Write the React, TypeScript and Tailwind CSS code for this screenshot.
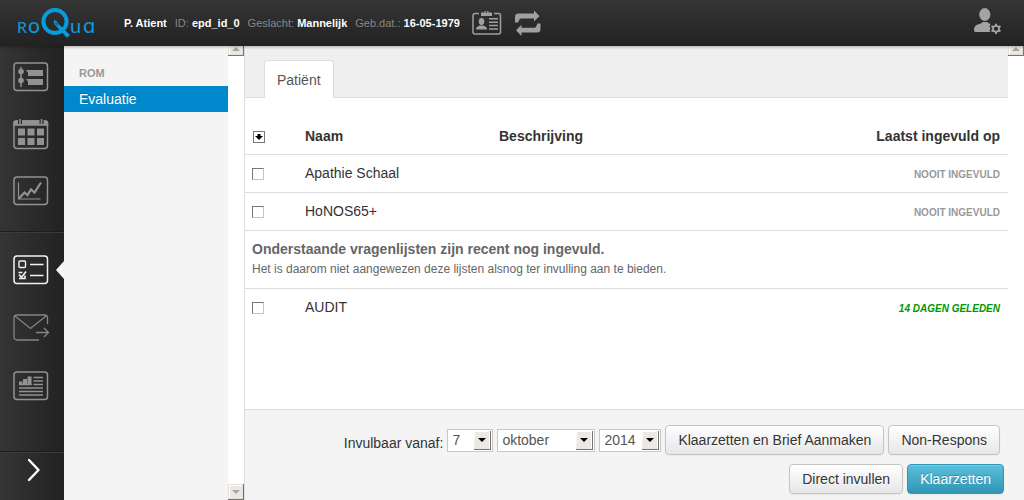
import React from "react";

function Logo() {
  return (
    <svg width="84" height="34" viewBox="0 0 84 34" role="img" aria-label="RoQua" fill="#0a9bdc">
      <text x="0" y="25" fontSize="16" fontFamily="Lato, sans-serif">R</text>
      <text x="11" y="25" fontSize="21" fontFamily="Lato, sans-serif">o</text>
      <circle cx="38" cy="13.500" r="11.600" fill="none" stroke="#0a9bdc" strokeWidth="4" />
      <path d="M41 15.500l12 11.500-3 2.800-11-11.800c-2-2-2.500-4-2-6 1.800.3 3.200 1.500 4 3.500z" />
      <path d="M38.500 14.500l2.200 3" stroke="#2b2b2b" strokeWidth="1" />
      <text x="53" y="25" fontSize="20" fontFamily="Lato, sans-serif">u</text>
      <text x="66" y="25" fontSize="20" fontFamily="Inter, sans-serif" fontWeight="400" style={{ fontFeatureSettings: '"cv11"' }}>a</text>
    </svg>
  );
}

function CardIcon() {
  return (
    <svg width="30" height="26" viewBox="0 0 30 26" fill="none" stroke="#a0a0a0" strokeWidth="1.500">
      <path d="M7 3.500H3A2 2 0 0 0 1 5.500V22a2 2 0 0 0 2 2h23.500a2 2 0 0 0 2-2V5.500a2 2 0 0 0-2-2H22" />
      <path d="M9 2.500h3.500V1.200h4v1.300H20v3.500H9z" fill="#a0a0a0" stroke="none" />
      <circle cx="14.500" cy="2.300" r=".8" fill="#2d2d2d" stroke="none" />
      <ellipse cx="9.500" cy="11.500" rx="2.800" ry="3.400" fill="#a0a0a0" stroke="none" />
      <path d="M4 19.500c0-2.800 2-3.200 4-4h3c2 .8 4 1.200 4 4z" fill="#a0a0a0" stroke="none" />
      <path d="M17 8.800h9M17 12.200h9M17 15.600h9M17 19h9" />
    </svg>
  );
}

function RefreshIcon() {
  return (
    <svg width="27" height="27" viewBox="0 0 27 27" fill="#a0a0a0">
      <path d="M1 12.500V7q0-3.500 3.500-3.500H20V0.500l5.500 5.500-5.500 5.500V8.500H7.500q-1.500 0-2 1L4 12.500z" />
      <path d="M26.500 13.500V19q0 3.500-3.500 3.500H7.500V26L2 20.300l5.500-5.500v3H20q1.500 0 2-1l1.500-3.300z" />
    </svg>
  );
}

function UserIcon() {
  return (
    <svg width="28" height="26" viewBox="0 0 28 26" fill="#a3a3a3">
      <ellipse cx="10.800" cy="6.500" rx="5.600" ry="6.500" />
      <path d="M0 22.500c0-4 1.500-5.500 6-6.700 1.500-.5 2-.8 2.500-1.800h5c.5 1 1.500 1.500 3 2l-1 2.500 1.200 2-1.200 2 .8 1.500H2q-2 0-2-1.500z" />
      <circle cx="22" cy="20.800" r="3" fill="none" stroke="#a3a3a3" strokeWidth="1.700" />
      <path d="M22 15.700v2M22 24v2M17.500 18.200l1.800 1M24.700 22.400l1.800 1M17.500 23.400l1.800-1M24.700 19.200l1.800-1" stroke="#a3a3a3" strokeWidth="2" />
    </svg>
  );
}

function Frame({ children, color = "#929292" }: { children: React.ReactNode; color?: string }) {
  return (
    <svg width="36" height="30" viewBox="0 0 36 30" fill="none" stroke={color} strokeWidth="1.500">
      <rect x="1" y="1" width="33.500" height="27.500" rx="3" />
      {children}
    </svg>
  );
}

function TimelineIcon() {
  return (
    <Frame>
      <path d="M8 5v20" />
      <g fill="#929292" stroke="none">
        <circle cx="8" cy="9.500" r="2.800" />
        <circle cx="8" cy="18.500" r="2.800" />
        <path d="M13 8h17v6H15v-3.500zM13 17h17v6H15v-3.500z" />
      </g>
    </Frame>
  );
}

function CalendarIcon() {
  return (
    <svg width="36" height="32" viewBox="0 0 36 32" fill="none" stroke="#929292" strokeWidth="1.500">
      <rect x="1" y="3" width="33.500" height="27.500" rx="3" />
      <path d="M1 7V5q0-2 2-2h29.500q2 0 2 2v2z" fill="#929292" />
      <path d="M7 0v6M28.500 0v6" stroke="#2b2b2b" strokeWidth="4" />
      <path d="M7 1v5M28.500 1v5" strokeWidth="1.500" />
      <path d="M5 10.500h7v7H5zM14.500 10.500h7v7h-7zM24 10.500h7v7h-7zM5 20h7v7H5zM14.500 20h7v7h-7zM24 20h7v7h-7z" fill="#929292" stroke="none" />
    </svg>
  );
}

function ChartIcon() {
  return (
    <Frame>
      <path d="M5.500 6.500v16.500h22" strokeWidth="1.200" />
      <path d="M6 22.500l5.500-6 3 2.500 3.500-5.500 3.500 3L28 6.500" strokeWidth="2.200" />
    </Frame>
  );
}

function ChecklistIcon() {
  return (
    <Frame color="#f2f2f2">
      <rect x="6" y="6" width="6.500" height="6.500" rx="1" strokeWidth="1.400" />
      <path d="M17 9.500h13.500M17 20.500h13.500" />
      <path d="M5.500 17.500h4M6 23.500h6v-3M6 19.500l2.500 3 4.500-6" strokeWidth="1.600" />
    </Frame>
  );
}

function MailIcon() {
  return (
    <svg width="37" height="28" viewBox="0 0 37 28" fill="none" stroke="#858585" strokeWidth="1.300">
      <path d="M26 26H4a3 3 0 0 1-3-3V4a3 3 0 0 1 3-3h27.500a3 3 0 0 1 3 3v6" />
      <path d="M2 2l15.500 12.500L33 2M23 18.500h12M31 14l4.500 4.500L31 23" />
    </svg>
  );
}

function NewsIcon() {
  return (
    <Frame>
      <path d="M6 10.500h3.500V14H6zM10 8h4v6h-4zM14.500 5.500h4V14h-4z" fill="#929292" stroke="none" />
      <path d="M6 13.500h12.500M20.500 6.500h9.500M20.500 10h9.500M20.500 13.500h9.500M6 17h24M6 20.500h24M6 24h24" />
    </Frame>
  );
}

function ScrollArrow({ down = false }: { down?: boolean }) {
  return (
    <svg width="16" height="16" viewBox="0 0 16 16" className="shrink-0">
      <rect width="16" height="16" fill="#77736e" />
      <rect width="15" height="15" fill="#e3dfda" />
      <rect x="1" y="1" width="13" height="13" fill="#fff" />
      <rect x="2" y="2" width="12" height="12" fill="#ebe8e4" />
      {down ? <path d="M4 6h8l-4 4z" fill="#aaa6a0" /> : <path d="M4 11h8l-4-4z" fill="#aaa6a0" />}
    </svg>
  );
}

function Scrollbar({ withEnd = false }: { withEnd?: boolean }) {
  return (
    <div className="flex w-4 shrink-0 flex-col justify-between bg-white" aria-hidden="true">
      <div className="flex h-2.5 items-end overflow-hidden">
        <ScrollArrow />
      </div>
      {withEnd && <ScrollArrow down />}
    </div>
  );
}

function DateSelect({ label, value, options, width }: { label: string; value: string; options: string[]; width: string }) {
  return (
    <div className={`relative ${width}`}>
      <select
        id={label}
        aria-label={label}
        defaultValue={value}
        className="block h-[23px] w-full appearance-none border border-[#c8c8c8] bg-white pr-4 pb-0.5 pl-1 text-sm leading-5 text-[#555]"
      >
        {options.map((o) => (
          <option key={o}>{o}</option>
        ))}
      </select>
      <svg width="17" height="19" viewBox="0 0 17 19" className="pointer-events-none absolute top-0.5 right-0.5">
        <path d="M0 0h17v19H0z" fill="#77736e" />
        <path d="M0 0h16v18H0z" fill="#fff" />
        <path d="M1 1h14v17H0z" fill="#ece8e3" />
        <path d="M4 7h8l-4 4z" fill="#000" />
      </svg>
    </div>
  );
}

function Button({ children, primary = false }: { children: React.ReactNode; primary?: boolean }) {
  const look = primary
    ? "border-[#2f96b4] bg-linear-to-b from-[#5bc0de] to-[#2f96b4] text-white [text-shadow:0_-1px_0_rgba(0,0,0,0.25)]"
    : "border-[#c4c4c4] bg-linear-to-b from-white to-[#e6e6e6] text-[#333] [text-shadow:0_1px_1px_rgba(255,255,255,0.75)]";
  return (
    <button
      type="button"
      className={`rounded border px-3 py-1 text-sm leading-5 whitespace-nowrap shadow-[inset_0_1px_0_rgba(255,255,255,0.2),0_1px_2px_rgba(0,0,0,0.05)] ${look}`}
    >
      {children}
    </button>
  );
}

function PatientField({ label, value }: { label?: string; value: string }) {
  return (
    <span className="text-[#888]">
      {label && <>{label} </>}
      <b className="text-white">{value}</b>
    </span>
  );
}

function Check({ name }: { name: string }) {
  return (
    <input
      type="checkbox"
      aria-label={name}
      className="mt-[5px] block size-3 appearance-none border border-t-[#777] border-r-[#c4c4c4] border-b-[#c4c4c4] border-l-[#777] bg-white checked:bg-[#555]"
    />
  );
}

function Row({ name, status, recent = false }: { name: string; status: string; recent?: boolean }) {
  return (
    <tr className="h-[38px] border-t border-[#ddd] align-top">
      <td className="px-[7px] py-2"><Check name={name} /></td>
      <td className="p-2">{name}</td>
      <td className="p-2" />
      <td className={`px-2 pt-2.5 text-right text-[10px] font-bold uppercase ${recent ? "text-[#090] italic" : "text-[#999]"}`}>
        {status}
      </td>
    </tr>
  );
}

const navLink = "flex h-[30px] items-center pl-[13px]";

export default function App() {
  return (
    <div className="flex h-screen flex-col overflow-hidden bg-white font-['Liberation_Sans',Arial,sans-serif] text-sm leading-5 text-[#333]">
      <header className="z-10 flex h-[46px] shrink-0 items-center bg-linear-to-b from-[#353535] to-[#222] pr-[22px] pl-[17px] shadow-[0_1px_3px_rgba(0,0,0,0.3)]">
        <a href="#home" className="mr-[23px] pt-1"><Logo /></a>
        <div className="flex gap-2 text-[11px] whitespace-nowrap">
          <PatientField value="P. Atient" />
          <PatientField label="ID:" value="epd_id_0" />
          <PatientField label="Geslacht:" value="Mannelijk" />
          <PatientField label="Geb.dat.:" value="16-05-1979" />
        </div>
        <button type="button" aria-label="Patiëntkaart" className="ml-3"><CardIcon /></button>
        <button type="button" aria-label="Vernieuwen" className="ml-3"><RefreshIcon /></button>
        <button type="button" aria-label="Account" className="ml-auto pb-1"><UserIcon /></button>
      </header>

      <div className="flex min-h-0 flex-1">
        <nav aria-label="Hoofdmenu" className="flex w-16 shrink-0 flex-col bg-linear-to-r from-[#353535] to-[#222]">
          <div className="flex h-[185px] flex-col gap-[27px] pt-4">
            <a href="#tijdlijn" aria-label="Tijdlijn" className={navLink}><TimelineIcon /></a>
            <a href="#agenda" aria-label="Agenda" className={navLink}><CalendarIcon /></a>
            <a href="#grafieken" aria-label="Grafieken" className={navLink}><ChartIcon /></a>
          </div>
          <div className="flex flex-1 flex-col gap-7 border-t border-[#1d1d1d] pt-[23px] shadow-[inset_0_1px_0_#3c3c3c]">
            <a href="#lijsten" aria-label="Vragenlijsten" aria-current="page" className={`${navLink} justify-between`}>
              <ChecklistIcon />
              <svg width="8" height="18" viewBox="0 0 8 18"><path d="M8 0v18L0 9z" fill="#f4f4f4" /></svg>
            </a>
            <a href="#post" aria-label="Verzenden" className={navLink}><MailIcon /></a>
            <a href="#rapport" aria-label="Rapportage" className={navLink}><NewsIcon /></a>
          </div>
          <button type="button" aria-label="Uitklappen" className="flex h-[49px] items-start justify-center border-t border-[#1d1d1d] pt-1.5 pl-1 shadow-[inset_0_1px_0_#3c3c3c]">
            <svg width="14" height="24" viewBox="0 0 14 24" fill="none" stroke="#fff" strokeWidth="2.400" strokeLinecap="round" strokeLinejoin="round">
              <path d="M2 2l9.500 10L2 22" />
            </svg>
          </button>
        </nav>

        <aside className="flex w-[180px] shrink-0 bg-[#f4f4f4]">
          <div className="flex-1 pt-[17px]">
            <h2 className="pl-[15px] text-[11px] font-bold text-[#999]">ROM</h2>
            <a href="#evaluatie" className="mt-[3px] block bg-[#0088cc] py-[3px] pl-[15px] text-white [text-shadow:0_-1px_0_rgba(0,0,0,0.2)]">Evaluatie</a>
          </div>
          <Scrollbar withEnd />
        </aside>

        <main className="flex min-w-0 flex-1 flex-col border-l border-[#ddd]">
          <div className="flex min-h-0 flex-1">
            <div className="min-w-0 flex-1 overflow-hidden">
              <div role="tablist" className="flex h-[52px] items-end border-b border-[#ddd] bg-[#efefef] pl-[19px]">
                <button type="button" role="tab" aria-selected="true" className="-mb-px h-[38px] rounded-t border border-b-0 border-[#ddd] bg-white px-3 text-[#555]">
                  Patiënt
                </button>
              </div>
              <table className="mt-5 w-full table-fixed border-collapse text-left">
                <colgroup>
                  <col className="w-[52px]" />
                  <col className="w-[194px]" />
                  <col />
                  <col className="w-[180px]" />
                </colgroup>
                <thead>
                  <tr className="align-top">
                    <th className="p-2">
                      <button type="button" aria-label="Alles selecteren" className="mt-[5px] block size-3 border border-[#777] bg-white">
                        <svg width="10" height="10" viewBox="0 0 10 10"><path d="M3.500 2h3v2H9L5 8 1 4h2.500z" fill="#000" /></svg>
                      </button>
                    </th>
                    <th className="p-2">Naam</th>
                    <th className="p-2">Beschrijving</th>
                    <th className="p-2 text-right">Laatst ingevuld op</th>
                  </tr>
                </thead>
                <tbody>
                  <Row name="Apathie Schaal" status="Nooit ingevuld" />
                  <Row name="HoNOS65+" status="Nooit ingevuld" />
                  <tr className="border-t border-[#ddd]">
                    <td colSpan={4} className="px-[7px] py-2 text-[#666]">
                      <strong className="block">Onderstaande vragenlijsten zijn recent nog ingevuld.</strong>
                      <p className="pb-px text-xs leading-5">Het is daarom niet aangewezen deze lijsten alsnog ter invulling aan te bieden.</p>
                    </td>
                  </tr>
                  <Row name="AUDIT" status="14 dagen geleden" recent />
                </tbody>
              </table>
            </div>
            <Scrollbar />
          </div>

          <footer className="flex flex-col items-end gap-[9px] border-t border-[#ddd] bg-[#f4f4f4] pt-[15px] pr-5 pb-1.5">
            <div className="flex items-center gap-1 pr-1">
              <label htmlFor="Dag" className="pt-1.5">Invulbaar vanaf:</label>
              <DateSelect label="Dag" value="7" options={["6", "7", "8"]} width="w-[46px]" />
              <DateSelect label="Maand" value="oktober" options={["september", "oktober", "november"]} width="w-[98px]" />
              <DateSelect label="Jaar" value="2014" options={["2013", "2014", "2015"]} width="w-[62px]" />
              <Button>Klaarzetten en Brief Aanmaken</Button>
              <Button>Non-Respons</Button>
            </div>
            <div className="flex gap-1">
              <Button>Direct invullen</Button>
              <Button primary>Klaarzetten</Button>
            </div>
          </footer>
        </main>
      </div>
    </div>
  );
}
